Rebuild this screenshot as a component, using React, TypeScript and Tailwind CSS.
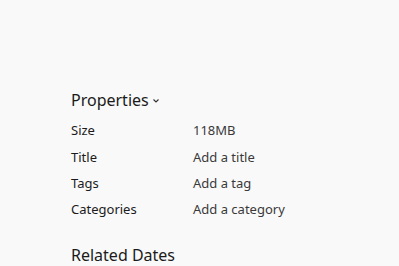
export default function App() {
  const rows = [
    ["Size", "118MB"],
    ["Title", "Add a title"],
    ["Tags", "Add a tag"],
    ["Categories", "Add a category"],
  ];
  return (
    <div className="w-[399px] h-[266px] overflow-hidden bg-[#f9f9f9] text-[#1b1b1b]" style={{ fontFamily: '"Noto Sans", sans-serif' }}>
      <div className="pl-[71px] pt-[89px]">
        <div className="flex items-center gap-[3px] h-[22px]">
          <span className="text-[16px] leading-[22px]">Properties</span>
          <svg width="8" height="8" viewBox="0 0 8 8" className="mt-[1px]">
            <path d="M1.5 2.5 L4 5 L6.5 2.5" fill="none" stroke="#333" strokeWidth="1.1" />
          </svg>
        </div>
        <div className="mt-[7px] flex flex-col">
          {rows.map(([k, v]) => (
            <div key={k} className="flex h-[26.3px] items-center text-[13px]">
              <span className="w-[122px]">{k}</span>
              <span className="text-[#3a3a3a]">{v}</span>
            </div>
          ))}
        </div>
        <div className="mt-[21px] text-[16px] leading-[22px]">Related Dates</div>
      </div>
    </div>
  );
}
